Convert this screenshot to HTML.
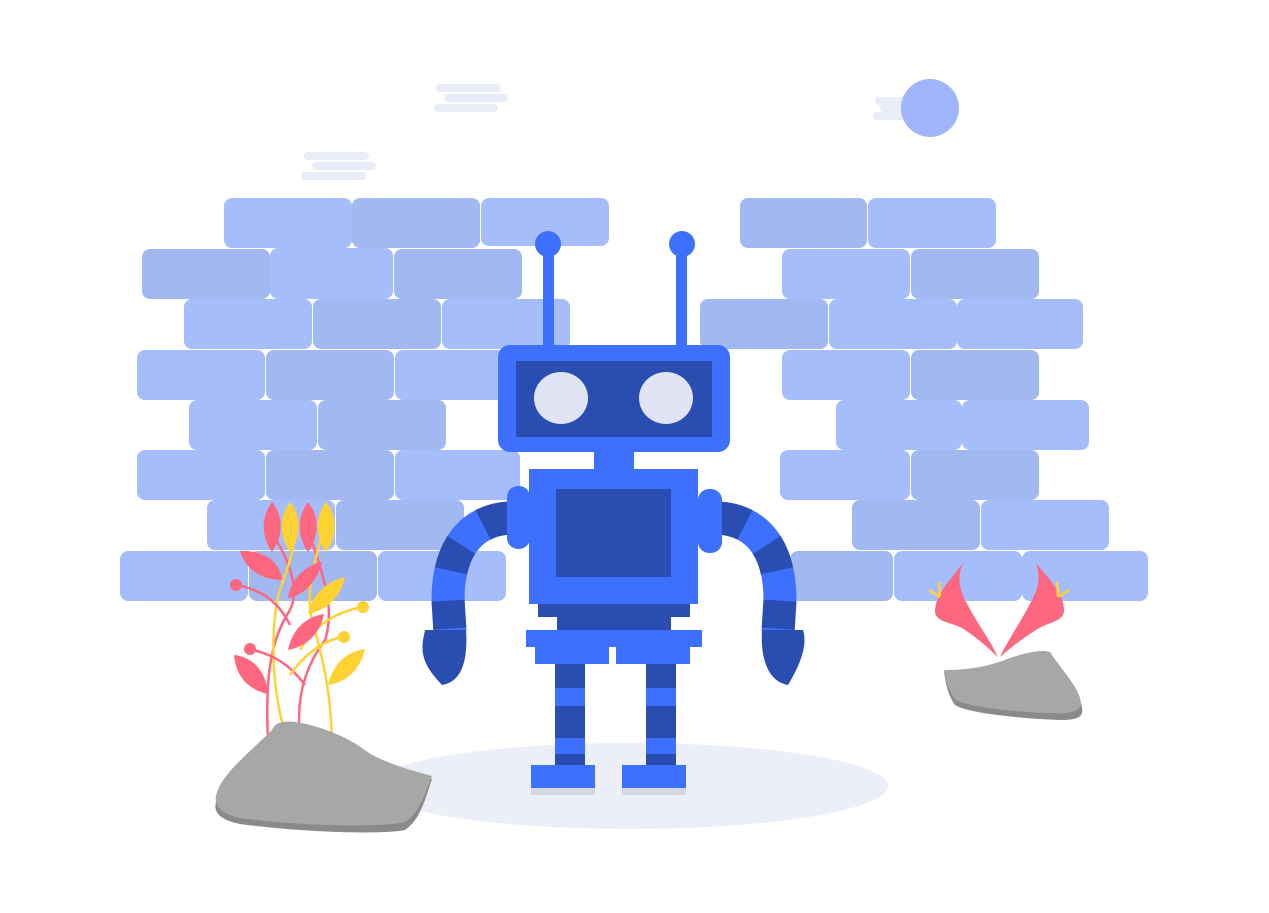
<!DOCTYPE html>
<html><head><meta charset="utf-8"><style>
html,body{margin:0;padding:0;background:#fff;width:1269px;height:913px;overflow:hidden}
</style></head><body>
<svg width="1269" height="913" viewBox="0 0 1269 913" xmlns="http://www.w3.org/2000/svg">
<g stroke="#e9edf8" stroke-width="8" stroke-linecap="round">
<line x1="440" y1="88" x2="497" y2="88"/><line x1="448" y1="98" x2="504" y2="98"/><line x1="438" y1="108" x2="494" y2="108"/>
<line x1="308" y1="156" x2="365" y2="156"/><line x1="316" y1="166" x2="372" y2="166"/><line x1="305" y1="176" x2="362" y2="176"/>
<line x1="879" y1="101" x2="920" y2="101"/><line x1="884" y1="108" x2="926" y2="108"/><line x1="877" y1="116" x2="918" y2="116"/>
</g>
<circle cx="930" cy="108" r="29" fill="#a0b6fc"/>
<g>
<g fill="#a6bdfc">
<rect x="224" y="198" width="128" height="50" rx="8"/><rect x="481" y="198" width="128" height="48" rx="8"/>
<rect x="270" y="248" width="123" height="51" rx="8"/>
<rect x="184" y="299" width="128" height="50" rx="8"/><rect x="442" y="299" width="128" height="50" rx="8"/>
<rect x="137" y="350" width="128" height="50" rx="8"/><rect x="395" y="350" width="125" height="50" rx="8"/>
<rect x="189" y="400" width="128" height="50" rx="8"/>
<rect x="137" y="450" width="128" height="50" rx="8"/><rect x="395" y="450" width="125" height="50" rx="8"/>
<rect x="207" y="500" width="128" height="50" rx="8"/>
<rect x="120" y="551" width="128" height="50" rx="8"/><rect x="378" y="551" width="128" height="50" rx="8"/>
<rect x="868" y="198" width="128" height="50" rx="8"/>
<rect x="782" y="249" width="128" height="50" rx="8"/>
<rect x="829" y="299" width="128" height="50" rx="8"/><rect x="957" y="299" width="126" height="50" rx="8"/>
<rect x="782" y="350" width="128" height="50" rx="8"/>
<rect x="836" y="400" width="126" height="50" rx="8"/><rect x="962" y="400" width="127" height="50" rx="8"/>
<rect x="780" y="450" width="130" height="50" rx="8"/>
<rect x="981" y="500" width="128" height="50" rx="8"/>
<rect x="894" y="551" width="128" height="50" rx="8"/><rect x="1022" y="551" width="126" height="50" rx="8"/>
</g>
<g fill="#a2b8f0">
<rect x="352" y="198" width="128" height="50" rx="8"/>
<rect x="142" y="249" width="128" height="50" rx="8"/><rect x="394" y="249" width="128" height="50" rx="8"/>
<rect x="313" y="299" width="128" height="50" rx="8"/>
<rect x="266" y="350" width="128" height="50" rx="8"/>
<rect x="318" y="400" width="128" height="50" rx="8"/>
<rect x="266" y="450" width="128" height="50" rx="8"/>
<rect x="336" y="500" width="128" height="50" rx="8"/>
<rect x="249" y="551" width="128" height="50" rx="8"/>
<rect x="740" y="198" width="127" height="50" rx="8"/>
<rect x="911" y="249" width="128" height="50" rx="8"/>
<rect x="700" y="299" width="128" height="50" rx="8"/>
<rect x="911" y="350" width="128" height="50" rx="8"/>
<rect x="911" y="450" width="128" height="50" rx="8"/>
<rect x="852" y="500" width="128" height="50" rx="8"/>
<rect x="790" y="551" width="103" height="50" rx="8"/>
</g>
</g>
<ellipse cx="630" cy="786" rx="258" ry="43" fill="#eceff8"/>
<!-- right plant -->
<path d="M963 563 C950 580 935 595 935 612 C936 622 950 622 962 628 C978 638 990 650 998 657 C990 640 975 620 965 600 C958 585 958 575 963 563Z" fill="#fd6780"/>
<path d="M1036 563 C1050 580 1065 595 1064 612 C1062 622 1048 622 1036 630 C1020 640 1008 650 1000 657 C1008 640 1022 620 1032 600 C1040 585 1040 575 1036 563Z" fill="#fd6780"/>
<g stroke="#ffd234" stroke-width="2.5"><line x1="929" y1="590" x2="940" y2="597"/><line x1="939" y1="582" x2="940" y2="596"/><line x1="1069" y1="590" x2="1058" y2="597"/><line x1="1057" y1="582" x2="1058" y2="596"/></g>
<path d="M944 672 C970 672 990 668 1010 660 C1025 655 1040 652 1050 654 C1060 670 1080 690 1082 708 C1084 718 1075 720 1060 720 C1010 718 965 712 955 705 C948 695 946 685 944 672Z" fill="#8a8a8a"/>
<path d="M944 670 C970 670 990 666 1010 658 C1025 653 1040 649 1050 652 C1060 668 1080 688 1081 703 C1080 712 1070 714 1050 713 C1010 712 965 706 956 700 C948 690 946 682 944 670Z" fill="#a7a7a7"/>
<!-- left plant -->
<g fill="none" stroke-width="2.5">
<path d="M268 740 C265 680 270 640 290 610 C300 590 290 560 270 530" stroke="#fd6780"/>
<path d="M290 745 C270 700 270 620 280 590 C290 560 300 540 288 520" stroke="#ffd234"/>
<path d="M300 735 C295 690 310 660 325 640 C335 610 325 580 308 530" stroke="#fd6780"/>
<path d="M332 740 C330 680 320 650 312 620 C305 590 315 560 325 525" stroke="#ffd234"/>
<path d="M236 585 C265 590 280 605 290 625" stroke="#fd6780"/>
<path d="M250 649 C275 655 290 665 305 685" stroke="#fd6780"/>
<path d="M363 607 C335 612 315 625 300 650" stroke="#ffd234"/>
<path d="M344 637 C320 640 300 660 290 675" stroke="#ffd234"/>
</g>
<g fill="#fd6780"><circle cx="236" cy="585" r="6"/><circle cx="250" cy="649" r="6"/></g>
<g fill="#ffd234"><circle cx="363" cy="607" r="6"/><circle cx="344" cy="637" r="6"/></g>
<g fill="#fd6780">
<path d="M272 552 C260 535 262 515 272 502 C283 515 284 535 272 552Z"/>
<path d="M308 552 C296 535 298 515 308 502 C319 515 320 535 308 552Z"/>
<path d="M240 551 C262 550 280 560 282 580 C260 580 245 568 240 551Z"/>
<path d="M288 598 C290 580 305 565 322 562 C318 580 305 595 288 598Z"/>
<path d="M288 650 C292 630 305 617 324 614 C320 635 305 647 288 650Z"/>
<path d="M234 655 C252 657 266 670 268 694 C250 690 236 678 234 655Z"/>
</g>
<g fill="#ffd234">
<path d="M290 552 C278 535 280 515 290 502 C301 515 302 535 290 552Z"/>
<path d="M326 552 C314 535 316 515 326 502 C337 515 338 535 326 552Z"/>
<path d="M308 614 C312 595 325 582 345 577 C340 598 327 610 308 614Z"/>
<path d="M328 685 C333 665 345 652 365 649 C360 670 347 682 328 685Z"/>
</g>
<path d="M216 802 C220 780 250 755 272 732 L285 725 C310 722 345 735 362 752 C380 765 410 772 432 779 C425 800 420 820 405 830 C380 835 300 832 240 824 C220 820 213 812 216 802Z" fill="#8a8a8a"/>
<path d="M216 796 C220 775 250 752 272 730 C276 722 282 721 296 722 C320 726 345 736 362 748 C380 762 410 770 432 776 C425 795 418 814 405 822 C380 828 300 826 240 818 C222 814 214 806 216 796Z" fill="#a7a7a7"/>
<!-- robot arms -->
<g fill="none" stroke-linecap="butt">
<path d="M510 518 C470 520 448 550 448 600 L450 632" stroke="#3d70ff" stroke-width="33"/>
<path d="M510 518 C470 520 448 550 448 600 L450 632" stroke="#2a4db1" stroke-width="33" stroke-dasharray="28 30"/>
<path d="M718 518 C758 520 780 550 780 600 L778 632" stroke="#3d70ff" stroke-width="33"/>
<path d="M718 518 C758 520 780 550 780 600 L778 632" stroke="#2a4db1" stroke-width="33" stroke-dasharray="28 30"/>
</g>
<path d="M425 630 L466 630 C468 660 462 682 442 685 C430 672 420 660 423 640Z" fill="#2a4db1"/>
<path d="M762 630 L803 630 C808 645 800 665 788 685 C770 682 760 662 762 630Z" fill="#2a4db1"/>
<rect x="543" y="244" width="11" height="102" fill="#3d70ff"/>
<rect x="676" y="244" width="11" height="102" fill="#3d70ff"/>
<circle cx="548" cy="244" r="13" fill="#3d70ff"/><circle cx="682" cy="244" r="13" fill="#3d70ff"/>
<rect x="498" y="345" width="232" height="107" rx="12" fill="#3d70ff"/>
<rect x="516" y="361" width="196" height="76" fill="#2a4db1"/>
<ellipse cx="561" cy="398" rx="27" ry="26" fill="#dfe3f3"/>
<ellipse cx="666" cy="398" rx="27" ry="26" fill="#dfe3f3"/>
<rect x="594" y="452" width="40" height="18" fill="#3d70ff"/>
<rect x="529" y="469" width="169" height="135" fill="#3d70ff"/>
<rect x="556" y="489" width="115" height="88" fill="#2a4db1"/>
<rect x="507" y="486" width="23" height="63" rx="11" fill="#3d70ff"/>
<rect x="698" y="489" width="24" height="64" rx="11" fill="#3d70ff"/>
<rect x="538" y="604" width="152" height="13" fill="#2a4db1"/>
<rect x="557" y="617" width="114" height="13" fill="#2a4db1"/>
<rect x="526" y="630" width="176" height="17" fill="#3d70ff"/>
<rect x="535" y="647" width="74" height="17" fill="#3d70ff"/>
<rect x="616" y="647" width="74" height="17" fill="#3d70ff"/>
<rect x="555" y="664" width="30" height="101" fill="#2a4db1"/>
<rect x="646" y="664" width="30" height="101" fill="#2a4db1"/>
<rect x="555" y="688" width="30" height="18" fill="#3d70ff"/><rect x="646" y="688" width="30" height="18" fill="#3d70ff"/>
<rect x="555" y="738" width="30" height="16" fill="#3d70ff"/><rect x="646" y="738" width="30" height="16" fill="#3d70ff"/>
<rect x="531" y="788" width="64" height="7" fill="#d5d8e2"/><rect x="622" y="788" width="64" height="7" fill="#d5d8e2"/>
<rect x="531" y="765" width="64" height="23" fill="#3d70ff"/>
<rect x="622" y="765" width="64" height="23" fill="#3d70ff"/>
</svg>
</body></html>
